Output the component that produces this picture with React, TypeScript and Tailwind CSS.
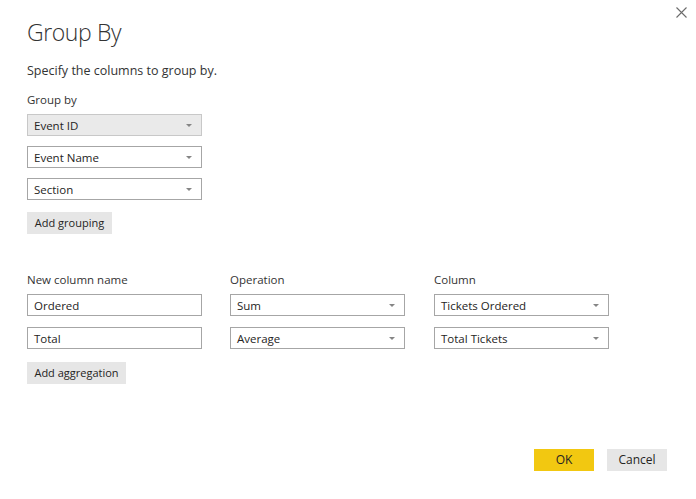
import React from "react";

const font = { fontFamily: '"Open Sans", "Noto Sans", sans-serif' };

function Caret() {
  return (
    <svg width="6" height="3" viewBox="0 0 6 3" className="shrink-0">
      <path d="M0 0 H6 L3 3 Z" fill="#858585" />
    </svg>
  );
}

function Select({ value, disabled }: { value: string; disabled?: boolean }) {
  return (
    <div
      className={`w-[175px] h-[22px] flex items-center justify-between pl-[6px] pr-[9px] border text-[11.5px] text-[#252423] ${
        disabled ? "bg-[#eaeaea] border-[#c8c8c8]" : "bg-white border-[#a6a6a6]"
      }`}
    >
      <span className="leading-none pt-[1px]">{value}</span>
      <Caret />
    </div>
  );
}

function Input({ value }: { value: string }) {
  return (
    <div className="w-[175px] h-[22px] flex items-center pl-[6px] border border-[#a6a6a6] bg-white text-[11.5px] text-[#252423]">
      <span className="leading-none pt-[1px]">{value}</span>
    </div>
  );
}

function Btn({ children, w }: { children: React.ReactNode; w: string }) {
  return (
    <div className={`${w} h-[22px] flex items-center justify-center bg-[#e6e6e6] text-[11px] text-[#252423]`}>
      {children}
    </div>
  );
}

export default function App() {
  return (
    <div className="w-[696px] h-[499px] bg-white relative overflow-hidden" style={font}>
      <svg className="absolute left-[676px] top-[7px]" width="11" height="11" viewBox="0 0 11 11">
        <path d="M0.5 0.5 L10.5 10.5 M10.5 0.5 L0.5 10.5" stroke="#6b6b6b" strokeWidth="1.1" />
      </svg>
      <div className="pl-[27px] pt-[16px] flex flex-col">
        <div className="text-[23px] font-light text-[#333333] leading-[32px] tracking-[-0.4px]">Group By</div>
        <div className="mt-[14px] text-[12.5px] text-[#333333] leading-[18px]">Specify the columns to group by.</div>
        <div className="mt-[12px] text-[11.5px] text-[#333333] leading-[16px]">Group by</div>
        <div className="mt-[6px] flex flex-col gap-[10px]">
          <Select value="Event ID" disabled />
          <Select value="Event Name" />
          <Select value="Section" />
        </div>
        <div className="mt-[12px]">
          <Btn w="w-[85px]">Add grouping</Btn>
        </div>
        <div className="mt-[38px] flex">
          <div className="flex flex-col">
            <div className="text-[11.5px] text-[#333333] leading-[16px]">New column name</div>
            <div className="mt-[6px] flex flex-col gap-[11px]">
              <Input value="Ordered" />
              <Input value="Total" />
            </div>
          </div>
          <div className="flex flex-col ml-[28px]">
            <div className="text-[11.5px] text-[#333333] leading-[16px]">Operation</div>
            <div className="mt-[6px] flex flex-col gap-[11px]">
              <Select value="Sum" />
              <Select value="Average" />
            </div>
          </div>
          <div className="flex flex-col ml-[29px]">
            <div className="text-[11.5px] text-[#333333] leading-[16px]">Column</div>
            <div className="mt-[6px] flex flex-col gap-[11px]">
              <Select value="Tickets Ordered" />
              <Select value="Total Tickets" />
            </div>
          </div>
        </div>
        <div className="mt-[13px]">
          <Btn w="w-[99px]">Add aggregation</Btn>
        </div>
      </div>
      <div className="absolute left-[534px] top-[449px] flex gap-[13px]">
        <div className="w-[60px] h-[22px] flex items-center justify-center bg-[#f2c811] text-[12px] text-[#252423]">OK</div>
        <div className="w-[60px] h-[22px] flex items-center justify-center bg-[#e6e6e6] text-[12px] text-[#252423]">Cancel</div>
      </div>
    </div>
  );
}
